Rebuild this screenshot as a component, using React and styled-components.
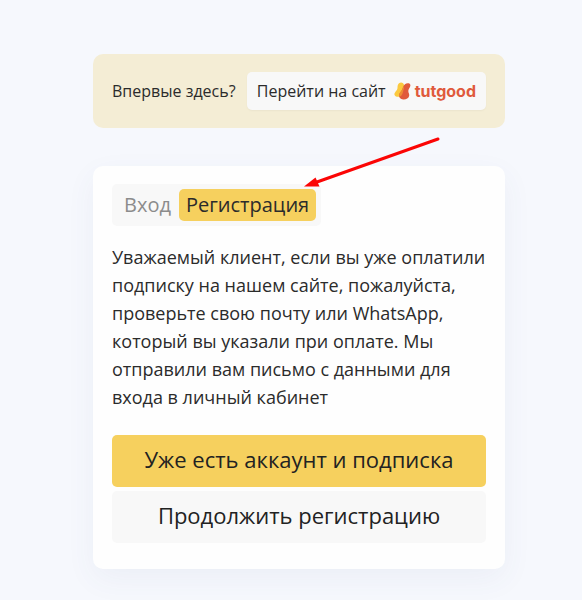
import React, { useState } from "react";
import styled, { createGlobalStyle } from "styled-components";

const App = () => {
  const [tab, setTab] = useState("signup");

  return (
    <Container>
      <GlobalStyle />
      <Banner>
        <Question>Впервые здесь?</Question>
        <SiteLink href="#site">
          Перейти на сайт
          <Brand>
            <Logo />
            tutgood
          </Brand>
        </SiteLink>
      </Banner>

      <Card>
        <Tabs>
          <Tab
            type="button"
            $active={tab === "signin"}
            onClick={() => setTab("signin")}
          >
            Вход
          </Tab>
          <Tab
            type="button"
            $active={tab === "signup"}
            onClick={() => setTab("signup")}
          >
            Регистрация
          </Tab>
        </Tabs>
        <Text>
          Уважаемый клиент, если вы уже оплатили подписку на нашем сайте,
          пожалуйста, проверьте свою почту или WhatsApp, который вы указали при
          оплате. Мы отправили вам письмо с данными для входа в личный кабинет
        </Text>
        <Actions>
          <Button type="button" $primary>
            Уже есть аккаунт и подписка
          </Button>
          <Button type="button">Продолжить регистрацию</Button>
        </Actions>
        <Arrow viewBox="0 0 138 54" aria-hidden="true">
          <path d="M135 4 L14 47" stroke="#fb0505" strokeWidth="3" strokeLinecap="round" />
          <path d="M1 51.5 L12.5 42.5 L16.5 51.5 Z" fill="#fb0505" />
        </Arrow>
      </Card>
    </Container>
  );
};

const Logo = () => (
  <LogoSvg viewBox="0 0 17 18" aria-hidden="true">
    <path
      d="M5 1.2 C7.2 -0.2 9.8 0.9 10.2 3.4 C10.5 6 9.5 7.5 9 10 C8.4 13 7 14.6 4.6 14.8 C2 14.9 -0.2 13.6 0.5 11.4 C1.1 9.6 3 8.7 3.4 6.8 C3.7 4.8 3.2 2.5 5 1.2 Z"
      fill="#fbc93f"
    />
    <path
      d="M11 2.2 C12.6 1 16.6 0.8 16.4 3.6 C16.2 5.8 14.4 7 14.3 9 C14.2 10.7 15.6 11.8 15.2 13.8 C14.7 16.6 11.8 17.6 9.2 17.4 C6.5 17.2 4.6 15.4 5.1 12.8 C5.5 10.4 7.5 9.2 8.3 7.2 C9 5.2 9.4 3.4 11 2.2 Z"
      fill="#e05a3c"
    />
    <path
      d="M9.9 4.2 C9 5.6 8.8 7 7.4 8.8 C6 10.4 4.8 11.8 5.1 14.7 C7.3 14.2 8.4 12.8 9 10 C9.4 7.8 10.3 6.2 9.9 4.2 Z"
      fill="#ee8b35"
    />
  </LogoSvg>
);

export default App;

const GlobalStyle = createGlobalStyle`
  * {
    box-sizing: border-box;
  }
  body {
    margin: 0;
    min-height: 100vh;
    background: #f6f8fd;
    color: #2b2b2b;
    font-family: "Open Sans", "Noto Sans", sans-serif;
    font-weight: 380;
  }
`;

const Container = styled.main`
  display: flex;
  flex-direction: column;
  gap: 38px;
  padding: 54px 77px 31px 93px;
`;

const Banner = styled.section`
  display: flex;
  align-items: center;
  justify-content: space-between;
  padding: 18px 19px;
  background: #f4edd5;
  border-radius: 10px;
`;

const Question = styled.span`
  font-size: 16px;
  line-height: 24px;
  white-space: nowrap;
`;

const SiteLink = styled.a`
  display: flex;
  align-items: center;
  gap: 8px;
  height: 38px;
  padding: 0 10px;
  background: #f8f8f8;
  border-radius: 5px;
  box-shadow: 0 1px 2px rgba(0, 0, 0, 0.04);
  color: inherit;
  font-size: 16px;
  text-decoration: none;
  white-space: nowrap;
`;

const Brand = styled.span`
  display: flex;
  align-items: center;
  gap: 4px;
  color: #e05a3c;
  font-family: Inter, sans-serif;
  font-size: 16px;
  font-weight: 700;
`;

const LogoSvg = styled.svg`
  width: 17px;
  height: 18px;
`;

const Card = styled.section`
  position: relative;
  padding: 18px 19px 26px;
  background: #fefefe;
  border-radius: 10px;
  box-shadow: 0 10px 30px rgba(60, 90, 140, 0.06);
`;

const Tabs = styled.div`
  display: inline-flex;
  gap: 1px;
  padding: 5px;
  background: #f8f8f8;
  border-radius: 5px;
`;

const Tab = styled.button`
  height: 32px;
  padding: 0 7px;
  border: none;
  border-radius: 5px;
  background: ${(props) => (props.$active ? "#f6d05e" : "transparent")};
  color: ${(props) => (props.$active ? "#2b2b2b" : "#8c8c8c")};
  font-family: inherit;
  font-size: 20px;
  font-weight: inherit;
  line-height: 30px;
  cursor: pointer;
`;

const Text = styled.p`
  margin: 17px 0 24px;
  font-size: 18px;
  line-height: 28px;
`;

const Actions = styled.div`
  display: flex;
  flex-direction: column;
  gap: 4px;
`;

const Button = styled.button`
  height: 52px;
  padding: 0 16px 4px;
  border: none;
  border-radius: 5px;
  background: ${(props) => (props.$primary ? "#f6d05e" : "#f8f8f8")};
  color: #222;
  font-family: inherit;
  font-size: 22px;
  font-weight: inherit;
  cursor: pointer;
`;

const Arrow = styled.svg`
  position: absolute;
  top: -31px;
  left: 210px;
  width: 138px;
  height: 54px;
  pointer-events: none;
`;
